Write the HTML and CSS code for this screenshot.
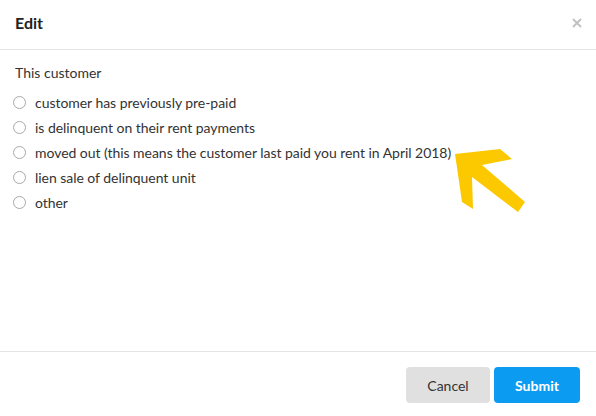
FILE: index.html
```html
<!DOCTYPE html>
<html lang="en">
<head>
  <meta charset="UTF-8">
  <title>Edit</title>
  <link rel="stylesheet" href="styles.css">
</head>
<body>
  <div class="modal">
    <div class="modal-header">
      <h1>Edit</h1>
      <button class="close" aria-label="Close">
        <svg width="10" height="10" viewBox="0 0 10 10"><path d="M1 1L9 9M9 1L1 9" stroke="#c2c2c2" stroke-width="2"/></svg>
      </button>
    </div>
    <div class="modal-body">
      <p class="question">This customer</p>
      <label class="option"><input type="radio" name="reason"><span class="radio"></span>customer has previously pre-paid</label>
      <label class="option"><input type="radio" name="reason"><span class="radio"></span>is delinquent on their rent payments</label>
      <label class="option"><input type="radio" name="reason"><span class="radio"></span>moved out (this means the customer last paid you rent in April 2018)</label>
      <label class="option"><input type="radio" name="reason"><span class="radio"></span>lien sale of delinquent unit</label>
      <label class="option"><input type="radio" name="reason"><span class="radio"></span>other</label>
    </div>
    <div class="modal-footer">
      <button class="btn btn-cancel">Cancel</button>
      <button class="btn btn-submit">Submit</button>
    </div>
    <svg class="arrow" width="80" height="70" viewBox="450 145 80 70">
      <polygon points="455,154 500,149 512,159 482,165 525,202 518,212 472,177 473,209 462,202" fill="#fcc800"/>
    </svg>
  </div>
</body>
</html>
```

FILE: styles.css
```css
body {
  margin: 0;
  font-family: 'Lato', 'Liberation Sans', sans-serif;
  color: #333;
  background: #fff;
}
.modal {
  position: relative;
  width: 596px;
  height: 416px;
  display: flex;
  flex-direction: column;
  background: #fff;
}
.modal-header {
  height: 50px;
  box-sizing: border-box;
  display: flex;
  align-items: center;
  justify-content: space-between;
  padding: 0 14px 4px 15px;
  border-bottom: 1px solid #e5e5e5;
}
.modal-header h1 {
  margin: 0;
  font-size: 16px;
  font-weight: 700;
  color: #222;
}
.close {
  border: none;
  background: none;
  padding: 0;
  width: 10px;
  height: 10px;
  display: flex;
  cursor: pointer;
}
.modal-body {
  flex: 1;
  padding: 13px 15px 0;
}
.question {
  margin: 0 0 7px;
  font-size: 14px;
  line-height: 20px;
}
.option {
  display: flex;
  align-items: center;
  height: 25px;
  font-size: 14px;
  letter-spacing: -0.04px;
  cursor: pointer;
}
.option input {
  display: none;
}
.radio {
  width: 13px;
  height: 13px;
  box-sizing: border-box;
  border: 1px solid #a8a8a8;
  border-radius: 50%;
  margin: 0 9px 0 -2px;
  background: #fff;
}
.option input:checked + .radio {
  border: 4px solid #0b9cf1;
}
.modal-footer {
  display: flex;
  justify-content: flex-end;
  gap: 4px;
  padding: 15px 16px 13px;
  border-top: 1px solid #e5e5e5;
}
.btn {
  height: 36px;
  border: none;
  border-radius: 4px;
  font-family: inherit;
  font-size: 14px;
  cursor: pointer;
}
.btn-cancel {
  width: 84px;
  background: #e0e0e0;
  color: #333;
}
.btn-submit {
  width: 86px;
  background: #0b9cf1;
  color: #fff;
  font-weight: 700;
}
.arrow {
  position: absolute;
  left: 450px;
  top: 145px;
}
```
